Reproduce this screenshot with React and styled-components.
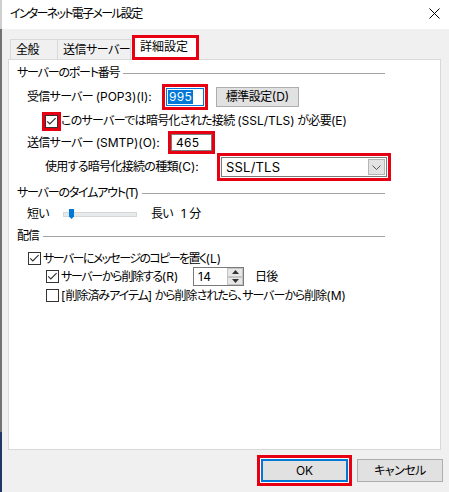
import React from "react";
import styled, { createGlobalStyle } from "styled-components";

const Global = createGlobalStyle`
  html, body { margin: 0; padding: 0; background: #f0f0f0; }
  body {
    font-family: Inter, "Noto Sans CJK JP", sans-serif;
    font-size: 12px;
    color: #000;
    font-feature-settings: "palt";
    letter-spacing: -0.7px;
  }
  #root { width: 449px; height: 492px; }
  * { box-sizing: border-box; }
`;

const RED = "#e60012";

const Screen = styled.div`
  display: flex;
  width: 449px;
  height: 492px;
  overflow: hidden;
`;

const EdgeStrip = styled.div`
  width: 2px;
  flex: none;
  background: linear-gradient(to bottom, #cfcfcf 0 29px, #727272 29px 432px, #1d3766 432px);
`;

const Dialog = styled.div`
  flex: 1;
  display: flex;
  flex-direction: column;
  background: #f0f0f0;
`;

const TitleBar = styled.div`
  height: 29px;
  flex: none;
  background: #fff;
  display: flex;
  align-items: center;
  justify-content: space-between;
  padding: 0 9px 2px 8px;
`;

const Title = styled.span`
  line-height: 1;
  white-space: nowrap;
  letter-spacing: -1.7px;
`;

const CloseIcon = styled.svg`
  display: block;
`;

const Content = styled.div`
  display: flex;
  flex-direction: column;
  padding: 0 8px 0 6px;
`;

const TabStrip = styled.div`
  height: 30px;
  display: flex;
  align-items: flex-end;
  padding-left: 2px;
`;

const Tab = styled.div`
  width: ${(p) => p.w}px;
  height: 20px;
  margin-left: ${(p) => (p.first ? 0 : -1)}px;
  border: 1px solid #d9d9d9;
  border-bottom: none;
  background: #f0f0f0;
  display: flex;
  align-items: center;
  padding-left: 5px;
  line-height: 1;
  white-space: nowrap;
  letter-spacing: -0.5px;
`;

const ActiveTab = styled.div`
  position: relative;
  z-index: 1;
  width: 67px;
  height: 25px;
  margin-left: 1px;
  margin-bottom: -1px;
  border: 3px solid ${RED};
  background: #fff;
  display: flex;
  align-items: center;
  padding: 0 0 2px 5px;
  line-height: 1;
  white-space: nowrap;
  letter-spacing: 0;
`;

const Panel = styled.div`
  height: 391px;
  border: 1px solid #d9d9d9;
  background: #fff;
  display: flex;
  flex-direction: column;
  padding: 3px 0 0 8px;
`;

const Section = styled.div`
  height: ${(p) => p.h}px;
  width: 368px;
  flex: none;
  display: flex;
  align-items: center;
  gap: 4px;
  line-height: 1;
  white-space: nowrap;
  letter-spacing: -1.2px;
`;

const SectionLine = styled.div`
  flex: 1;
  height: 1px;
  background: #a3a3a3;
`;

const Row = styled.div`
  height: ${(p) => p.h}px;
  flex: none;
  display: flex;
  align-items: center;
  padding-left: ${(p) => p.indent}px;
  line-height: 1;
  white-space: nowrap;
`;

const Label = styled.span`
  flex: none;
  width: ${(p) => (p.w ? `${p.w}px` : "auto")};
  margin-left: ${(p) => p.ml || 0}px;
  letter-spacing: ${(p) => (p.ls !== undefined ? p.ls : -0.7)}px;
  white-space: nowrap;
`;

const Lat = styled.span`
  letter-spacing: 0;
`;

const RedBox = styled.div`
  flex: none;
  display: flex;
  border: 3px solid ${RED};
  padding: ${(p) => p.pad || 0}px;
  background: #fff;
`;

const Field = styled.div`
  width: ${(p) => p.w}px;
  height: ${(p) => p.h}px;
  border: 1px solid ${(p) => (p.focused ? "#0078d7" : "#7a7a7a")};
  background: #fff;
  display: flex;
  align-items: center;
  padding-left: ${(p) => p.pl}px;
  letter-spacing: 0.3px;
`;

const Selected = styled.span`
  display: inline-flex;
  align-items: center;
  height: 14px;
  padding: 0 1px 0 1px;
  background: #0078d7;
  color: #fff;
`;

const PushButton = styled.div`
  flex: none;
  width: ${(p) => p.w}px;
  height: ${(p) => p.h}px;
  margin-left: ${(p) => p.ml || 0}px;
  border: ${(p) => (p.primary ? "2px solid #0078d7" : "1px solid #adadad")};
  background: #e1e1e1;
  display: flex;
  align-items: center;
  justify-content: center;
  line-height: 1;
  white-space: nowrap;
  letter-spacing: ${(p) => (p.ls !== undefined ? p.ls : -0.5)}px;
`;

const Combo = styled.div`
  width: 166px;
  height: 20px;
  border: 1px solid #7a7a7a;
  background: #fff;
  display: flex;
  align-items: center;
  justify-content: space-between;
  padding: 1px 1px 1px 4px;
  font-size: 13px;
  letter-spacing: 0.2px;
`;

const ComboArrow = styled.div`
  width: 17px;
  height: 100%;
  border: 1px solid #b4b4b4;
  background: #e3e3e3;
  display: flex;
  align-items: center;
  justify-content: center;
`;

const Box = styled.span`
  flex: none;
  width: 13px;
  height: 13px;
  border: 1px solid #333;
  background: #fff;
  display: flex;
  align-items: center;
  justify-content: center;
`;

const TrackWrap = styled.div`
  position: relative;
  flex: none;
  width: 74px;
  height: 5px;
  border: 1px solid #d6d6d6;
  background: #e7eaea;
`;

const Thumb = styled.svg`
  position: absolute;
  left: 5px;
  top: -4px;
`;

const Spin = styled.div`
  flex: none;
  width: 51px;
  height: 19px;
  border: 1px solid #7a7a7a;
  background: #fff;
  display: flex;
  letter-spacing: 0.3px;
`;

const SpinText = styled.div`
  flex: 1;
  display: flex;
  align-items: center;
  padding-left: 4px;
`;

const SpinButtons = styled.div`
  width: 16px;
  display: flex;
  flex-direction: column;
`;

const SpinBtn = styled.div`
  flex: 1;
  border: 1px solid #c4c4c4;
  background: #e6e6e6;
  display: flex;
  align-items: center;
  justify-content: center;
`;

const Footer = styled.div`
  padding: 9px 6px 0 0;
  display: flex;
  justify-content: flex-end;
`;

const FooterRow = styled.div`
  height: 23px;
  display: flex;
  align-items: center;
  gap: 5px;
`;

const Check = ({ checked }) => (
  <Box>
    {checked && (
      <svg width="11" height="11" viewBox="0 0 11 11">
        <polyline points="1.2,5.3 3.8,7.9 9.6,2.1" fill="none" stroke="#333" strokeWidth="1.2" />
      </svg>
    )}
  </Box>
);

export default function App() {
  return (
    <>
      <Global />
      <Screen>
        <EdgeStrip />
        <Dialog>
          <TitleBar>
            <Title>インターネット電子メール設定</Title>
            <CloseIcon width="11" height="11" viewBox="0 0 11 11">
              <path d="M0.5 0.5 L10.5 10.5 M10.5 0.5 L0.5 10.5" stroke="#000" strokeWidth="1" />
            </CloseIcon>
          </TitleBar>
          <Content>
            <TabStrip>
              <Tab first w={48}>全般</Tab>
              <Tab w={74}>送信サーバー</Tab>
              <ActiveTab>詳細設定</ActiveTab>
            </TabStrip>
            <Panel>
              <Section h={20}>
                サーバーのポート番号
                <SectionLine />
              </Section>
              <Row h={28} indent={10}>
                <Label w={135}>受信サーバー <Lat>(POP3)(I):</Lat></Label>
                <RedBox pad={1}>
                  <Field w={38} h={18} pl={1} focused>
                    <Selected>995</Selected>
                  </Field>
                </RedBox>
                <PushButton w={83} h={20} ml={8}>標準設定<Lat>(D)</Lat></PushButton>
              </Row>
              <Row h={20} indent={25}>
                <RedBox>
                  <Check checked />
                </RedBox>
                <Label>
                  このサーバーでは暗号化された接続 <Lat>(SSL/TLS)</Lat> が必要<Lat>(E)</Lat>
                </Label>
              </Row>
              <Row h={23} indent={10}>
                <Label w={141}>送信サーバー <Lat>(SMTP)(O):</Lat></Label>
                <RedBox>
                  <Field w={41} h={17} pl={4}>465</Field>
                </RedBox>
              </Row>
              <Row h={26} indent={28}>
                <Label w={172}>使用する暗号化接続の種類<Lat>(C):</Lat></Label>
                <RedBox pad={1}>
                  <Combo>
                    <span>SSL/TLS</span>
                    <ComboArrow>
                      <svg width="9" height="5" viewBox="0 0 9 5">
                        <polyline points="0.5,0.5 4.5,4.5 8.5,0.5" fill="none" stroke="#555" strokeWidth="1" />
                      </svg>
                    </ComboArrow>
                  </Combo>
                </RedBox>
              </Row>
              <Section h={26}>
                サーバーのタイムアウト(T)
                <SectionLine />
              </Section>
              <Row h={16} indent={10}>
                <Label w={36}>短い</Label>
                <TrackWrap>
                  <Thumb width="5" height="10" viewBox="0 0 5 10">
                    <polygon points="0,0 5,0 5,7.5 2.5,10 0,7.5" fill="#0078d7" />
                  </Thumb>
                </TrackWrap>
                <Label ml={14}>長い</Label>
                <Label ml={8} ls={0}>1 分</Label>
              </Row>
              <Section h={28}>
                配信
                <SectionLine />
              </Section>
              <Row h={17} indent={11}>
                <Check checked />
                <Label ml={2} ls={-1.6}>サーバーにメッセージのコピーを置く<Lat>(L)</Lat></Label>
              </Row>
              <Row h={19} indent={29}>
                <Check checked />
                <Label ml={2} w={132} ls={-1.3}>サーバーから削除する<Lat>(R)</Lat></Label>
                <Spin>
                  <SpinText>14</SpinText>
                  <SpinButtons>
                    <SpinBtn>
                      <svg width="7" height="4" viewBox="0 0 7 4">
                        <polygon points="0,4 7,4 3.5,0" fill="#333" />
                      </svg>
                    </SpinBtn>
                    <SpinBtn>
                      <svg width="7" height="4" viewBox="0 0 7 4">
                        <polygon points="0,0 7,0 3.5,4" fill="#333" />
                      </svg>
                    </SpinBtn>
                  </SpinButtons>
                </Spin>
                <Label ml={11}>日後</Label>
              </Row>
              <Row h={19} indent={29}>
                <Check />
                <Label ml={2} ls={-1.0}>
                  <Lat>[</Lat>削除済みアイテム<Lat>]</Lat> から削除されたら、サーバーから削除<Lat>(M)</Lat>
                </Label>
              </Row>
            </Panel>
          </Content>
          <Footer>
            <FooterRow>
              <RedBox pad={1}>
                <PushButton primary w={87} h={23} ls={0}>OK</PushButton>
              </RedBox>
              <PushButton w={86} h={23}>キャンセル</PushButton>
            </FooterRow>
          </Footer>
        </Dialog>
      </Screen>
    </>
  );
}
